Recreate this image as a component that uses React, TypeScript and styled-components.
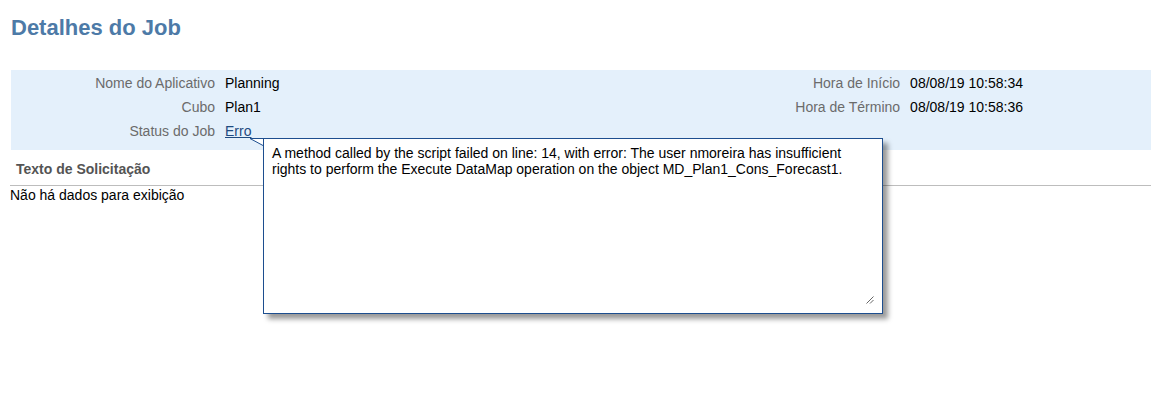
import React from "react";
import styled, { createGlobalStyle } from "styled-components";

const GlobalStyle = createGlobalStyle`
  html, body {
    margin: 0;
    padding: 0;
    background: #ffffff;
    font-family: "Liberation Sans", Arial, sans-serif;
    font-size: 14px;
    color: #000;
  }
`;

const Page = styled.div`
  width: 1151px;
  height: 407px;
  overflow: hidden;
  position: relative;
`;

const Title = styled.h1`
  margin: 0;
  padding: 14px 0 0 11px;
  height: 56px;
  box-sizing: border-box;
  font-size: 22px;
  font-weight: bold;
  color: #4d7aa7;
  line-height: 27px;
`;

const Panel = styled.section`
  margin: 14px 0 0 11px;
  background: #e4f0fb;
  height: 80px;
  box-sizing: border-box;
  display: flex;
  align-items: flex-start;
`;

const Group = styled.div<{ $labelWidth?: string; $push?: boolean }>`
  display: grid;
  grid-template-columns: ${(p) => p.$labelWidth ?? "auto"} auto;
  grid-auto-rows: 24px;
  column-gap: 10px;
  padding-top: 1px;
  margin-left: ${(p) => (p.$push ? "auto" : "0")};
  margin-right: ${(p) => (p.$push ? "128px" : "0")};
`;

const Label = styled.div`
  text-align: right;
  color: #6b6b6b;
  line-height: 24px;
  white-space: nowrap;
`;

const Value = styled.div`
  color: #000;
  line-height: 24px;
  white-space: nowrap;
  position: relative;
`;

const StatusLink = styled.a`
  color: #1e4a80;
  text-decoration: underline;
  cursor: pointer;
`;

const Popup = styled.div`
  position: absolute;
  left: 38px;
  top: 19px;
  z-index: 10;
`;

const Tail = styled.svg`
  position: absolute;
  left: -13px;
  top: 0;
  overflow: visible;
`;

const MessageBox = styled.textarea`
  display: block;
  width: 620px;
  height: 176px;
  box-sizing: border-box;
  margin: 0;
  padding: 6px 8px;
  border: 1px solid #1d4e8f;
  border-radius: 0;
  background: #fff;
  color: #000;
  font-family: "Liberation Sans", Arial, sans-serif;
  font-size: 14px;
  line-height: 16px;
  resize: none;
  outline: none;
  box-shadow: 5px 5px 5px rgba(0, 0, 0, 0.4);
  white-space: pre-wrap;
  overflow: hidden;
`;

const Grip = styled.svg`
  position: absolute;
  right: 9px;
  bottom: 10px;
`;

const SectionHeader = styled.h2`
  margin: 0 0 0 10px;
  padding: 11px 0 0 6px;
  height: 36px;
  box-sizing: border-box;
  font-size: 14px;
  font-weight: bold;
  color: #545454;
  line-height: 16px;
  border-bottom: 1px solid #bdbdbd;
`;

const EmptyText = styled.p`
  margin: 0 0 0 10px;
  padding-top: 1px;
  line-height: 17px;
  color: #000;
`;

const message =
  "A method called by the script failed on line: 14, with error: The user nmoreira has insufficient rights to perform the Execute DataMap operation on the object MD_Plan1_Cons_Forecast1.";

export default function App() {
  return (
    <Page>
      <GlobalStyle />
      <Title>Detalhes do Job</Title>
      <Panel>
        <Group $labelWidth="204px">
          <Label>Nome do Aplicativo</Label>
          <Value>Planning</Value>
          <Label>Cubo</Label>
          <Value>Plan1</Value>
          <Label>Status do Job</Label>
          <Value>
            <StatusLink>Erro</StatusLink>
            <Popup>
              <Tail width="13" height="8" viewBox="0 0 13 8">
                <path d="M0 0.5 L13 0.5 L13 7.5 Z" fill="#ffffff" />
                <path d="M0 0.5 L13 7.5" stroke="#1d4e8f" strokeWidth="1" fill="none" />
                <path d="M0 0.5 L13 0.5" stroke="#1d4e8f" strokeWidth="1" fill="none" />
              </Tail>
              <MessageBox readOnly value={message} />
              <Grip width="8" height="8" viewBox="0 0 8 8">
                <path d="M0.5 7.5 L7.5 0.5 M4 7.5 L7.5 4" stroke="#666" strokeWidth="1" fill="none" />
              </Grip>
            </Popup>
          </Value>
        </Group>
        <Group $push>
          <Label>Hora de Início</Label>
          <Value>08/08/19 10:58:34</Value>
          <Label>Hora de Término</Label>
          <Value>08/08/19 10:58:36</Value>
        </Group>
      </Panel>
      <SectionHeader>Texto de Solicitação</SectionHeader>
      <EmptyText>Não há dados para exibição</EmptyText>
    </Page>
  );
}
